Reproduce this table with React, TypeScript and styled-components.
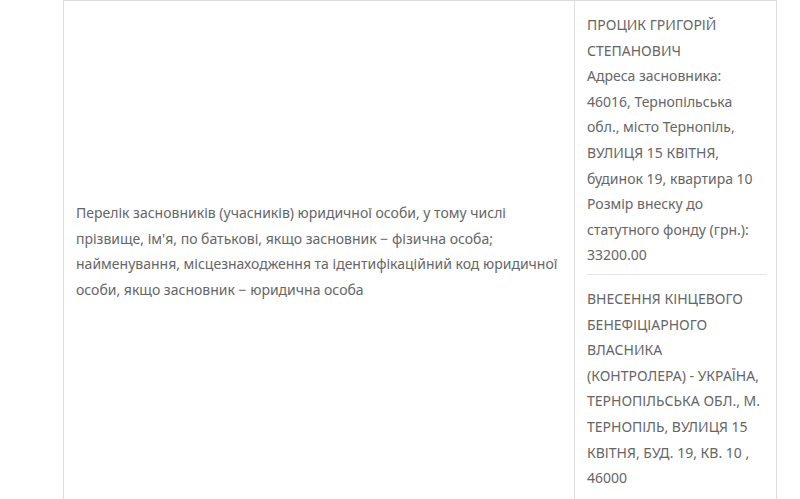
import React from 'react';
import styled, { createGlobalStyle } from 'styled-components';

const GlobalStyle = createGlobalStyle`
  html, body {
    margin: 0;
    padding: 0;
    background: #fff;
  }
  body {
    font-family: "Noto Sans", "Open Sans", sans-serif;
    overflow: hidden;
  }
`;

const Page = styled.div`
  padding: 0 23px 0 63px;
`;

const Table = styled.div`
  display: grid;
  grid-template-columns: 510px 204px;
  border: 1px solid #dcdcdc;
  border-bottom: none;
`;

const Cell = styled.div<{ $center?: boolean }>`
  padding: 11px 11px 40px 12px;
  color: #666;
  font-size: 14px;
  line-height: 25.6px;
  display: flex;
  flex-direction: column;
  justify-content: ${(p) => (p.$center ? 'center' : 'flex-start')};
  & + & {
    border-left: 1px solid #dcdcdc;
  }
`;

const Block = styled.div`
  & + & {
    margin-top: 6px;
    padding-top: 11px;
    border-top: 1px solid #e6e6e6;
  }
`;

const Line = styled.div`
  white-space: nowrap;
`;

const founders = [
  [
    'ПРОЦИК ГРИГОРІЙ',
    'СТЕПАНОВИЧ',
    'Адреса засновника:',
    '46016, Тернопільська',
    'обл., місто Тернопіль,',
    'ВУЛИЦЯ 15 КВІТНЯ,',
    'будинок 19, квартира 10',
    'Розмір внеску до',
    'статутного фонду (грн.):',
    '33200.00',
  ],
  [
    'ВНЕСЕННЯ КІНЦЕВОГО',
    'БЕНЕФІЦІАРНОГО',
    'ВЛАСНИКА',
    '(КОНТРОЛЕРА) - УКРАЇНА,',
    'ТЕРНОПІЛЬСЬКА ОБЛ., М.',
    'ТЕРНОПІЛЬ, ВУЛИЦЯ 15',
    'КВІТНЯ, БУД. 19, КВ. 10 ,',
    '46000',
  ],
];

const App: React.FC = () => (
  <Page>
    <GlobalStyle />
    <Table>
      <Cell $center>
        Перелік засновників (учасників) юридичної особи, у тому числі прізвище, ім'я, по батькові, якщо
        засновник − фізична особа; найменування, місцезнаходження та ідентифікаційний код юридичної
        особи, якщо засновник − юридична особа
      </Cell>
      <Cell>
        {founders.map((lines, i) => (
          <Block key={i}>
            {lines.map((l) => (
              <Line key={l}>{l}</Line>
            ))}
          </Block>
        ))}
      </Cell>
    </Table>
  </Page>
);

export default App;
